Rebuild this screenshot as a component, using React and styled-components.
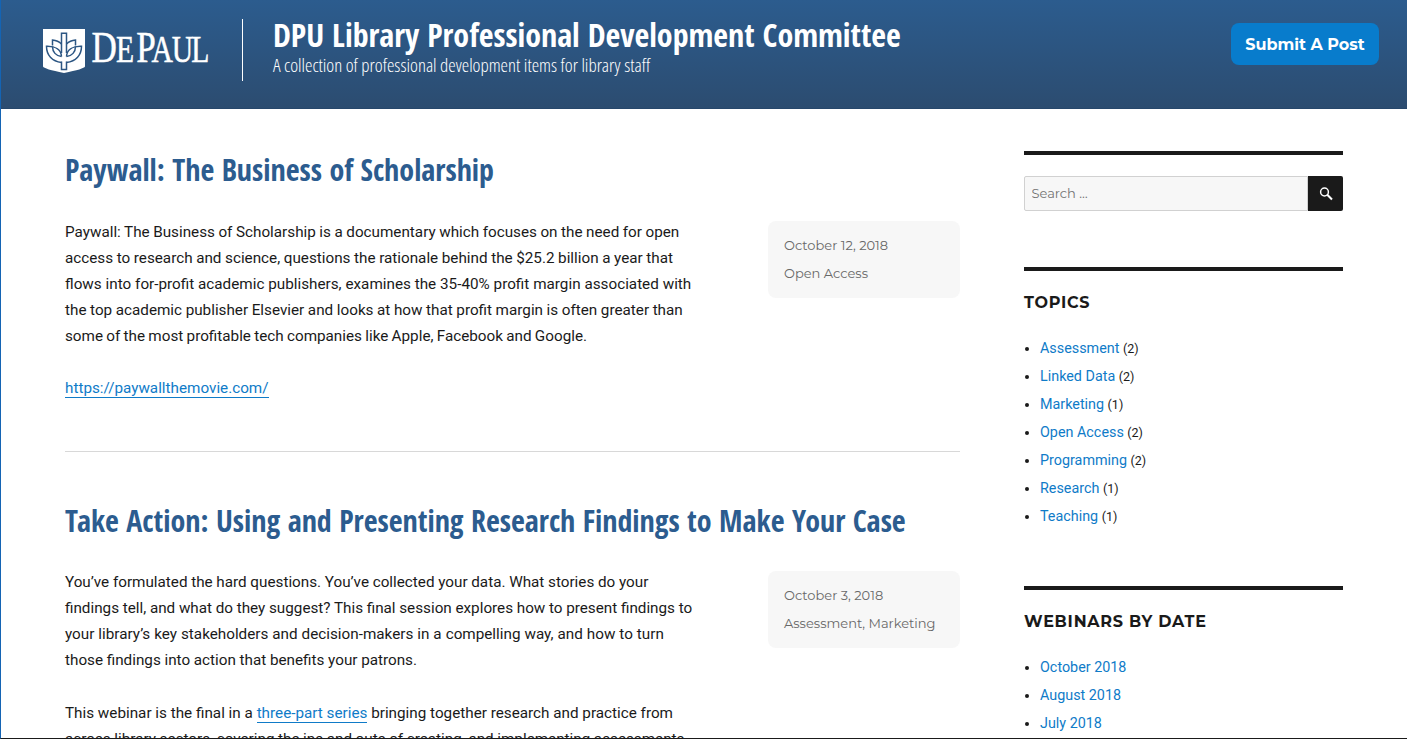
import React from "react";
import styled, { createGlobalStyle } from "styled-components";

const GlobalStyle = createGlobalStyle`
  *, *::before, *::after { box-sizing: border-box; }
  html, body { margin: 0; height: 100%; overflow: hidden; }
  body { background: #fff; color: #1a1a1a; font-family: Roboto, "Liberation Sans", sans-serif; }
`;

const Page = styled.div`
  height: 739px;
  overflow: hidden;
  display: flex;
  flex-direction: column;
  border-left: 1px solid #1464b4;
  border-bottom: 1px solid #1a1a1a;
  background: #fff;
`;

const Header = styled.header`
  flex: none;
  height: 109px;
  display: flex;
  align-items: flex-start;
  padding: 19px 28px 0 41px;
  background: linear-gradient(#2c5c8e, #2c4c70);
  border-bottom: 1px solid #27476b;
  color: #fff;
`;

const Logo = styled.svg`
  display: block;
  flex: none;
  width: 170px;
  height: 60px;
`;

const LogoText = styled.text`
  font-family: "Liberation Serif", serif;
  font-size: 45px;
  fill: #fff;
  stroke: #fff;
  stroke-width: 0.5px;
`;

const SmallCap = styled.tspan`
  font-size: 38px;
`;

const Branding = styled.div`
  flex: 1;
  height: 62px;
  margin-left: 30px;
  padding-left: 30px;
  border-left: 1px solid #fff;
  white-space: nowrap;
`;

const SiteTitle = styled.h1`
  margin: -4px 0 0;
  font-family: "Open Sans Condensed", "Open Sans", sans-serif;
  font-size: 32px;
  font-weight: 700;
  line-height: 40px;
`;

const Tagline = styled.p`
  margin: 1px 0 0;
  font-family: "Open Sans", sans-serif;
  font-stretch: 75%;
  font-size: 18.8px;
  font-weight: 300;
  line-height: 18px;
`;

const SubmitButton = styled.button`
  width: 148px;
  height: 42px;
  margin-top: 4px;
  padding: 1px 0 0;
  border: 0;
  border-radius: 8px;
  background: #087ccc;
  color: #fff;
  font: 700 16px/41px Montserrat, sans-serif;
`;

const Content = styled.div`
  flex: 1;
  min-height: 0;
  display: flex;
  justify-content: space-between;
  padding: 42px 64px 0;
`;

const Main = styled.main`
  width: 895px;
`;

const Post = styled.article`
  height: 301px;
  border-bottom: 1px solid #d8d8d8;

  & + & {
    height: auto;
    margin-top: 50px;
    border-bottom: 0;
  }
`;

const PostTitle = styled.h2`
  margin: 0;
  padding-top: 1px;
  font: 700 30px/36px "Open Sans Condensed", "Open Sans", sans-serif;
  color: #2c5c8f;
  white-space: nowrap;
`;

const PostBody = styled.div`
  display: flex;
  justify-content: space-between;
  align-items: flex-start;
  margin-top: 31px;

  ${Post} + ${Post} & { margin-top: 30px; }
`;

const Paragraph = styled.p`
  margin: 0 0 ${(p) => p.$gap || 26}px;
  font-size: 15.25px;
  line-height: 26px;
  white-space: nowrap;
`;

const TextLine = styled.span`
  display: block;
  word-spacing: ${(p) => p.$space || 0}px;
`;

const BodyLink = styled.a`
  color: #0f7bc8;
  border-bottom: 1px solid #0f7bc8;
`;

const Meta = styled.div`
  width: 192px;
  height: 77px;
  margin-top: 2px;
  padding: 10px 16px;
  border-radius: 8px;
  background: #f7f7f7;
  color: #686868;
  font: 400 13px/28px Montserrat, sans-serif;
  white-space: nowrap;
`;

const Sidebar = styled.aside`
  width: 319px;
`;

const Widget = styled.section`
  height: ${(p) => p.$height}px;
  padding-top: 21px;
  border-top: 4px solid #1a1a1a;
`;

const WidgetTitle = styled.h2`
  margin: 0;
  padding-top: 1px;
  font: 700 16px/20px Montserrat, sans-serif;
  letter-spacing: 0.76px;
`;

const SearchForm = styled.form`
  display: flex;
  height: 35px;
`;

const SearchInput = styled.input`
  flex: 1;
  min-width: 0;
  padding: 0 6.5px 2px;
  border: 1px solid #d1d1d1;
  border-radius: 2px 0 0 2px;
  background: #f7f7f7;
  font: 400 13px Montserrat, sans-serif;

  &::placeholder { color: #737373; opacity: 1; }
`;

const SearchButton = styled.button`
  width: 35px;
  padding: 0;
  display: grid;
  place-items: center;
  border: 0;
  border-radius: 0 2px 2px 0;
  background: #1a1a1a;
`;

const List = styled.ul`
  margin: 21px 0 0;
  padding: 0;
  list-style: none;
`;

const Item = styled.li`
  display: flex;
  align-items: center;
  height: 28px;
  font-size: 13px;

  &::before {
    content: "";
    width: 4px;
    height: 4px;
    margin: 2px 11px 0 1px;
    border-radius: 50%;
    background: #1a1a1a;
  }
`;

const ItemLink = styled.a`
  font-size: 14.35px;
  color: #0f7bc8;
`;

const Count = styled.span`
  margin-left: 3.5px;
  font-size: 12.5px;
`;

const posts = [
  {
    title: "Paywall: The Business of Scholarship",
    date: "October 12, 2018",
    topics: "Open Access",
    paragraphs: [
      {
        lines: [
          [-0.25, "Paywall: The Business of Scholarship is a documentary which focuses on the need for open"],
          [-0.2, "access to research and science, questions the rationale behind the $25.2 billion a year that"],
          [0.08, "flows into for-profit academic publishers, examines the 35-40% profit margin associated with"],
          [-0.2, "the top academic publisher Elsevier and looks at how that profit margin is often greater than"],
          [-0.5, "some of the most profitable tech companies like Apple, Facebook and Google."],
        ],
      },
      { lines: [[0, <BodyLink>https://paywallthemovie.com/</BodyLink>]] },
    ],
  },
  {
    title: "Take Action: Using and Presenting Research Findings to Make Your Case",
    date: "October 3, 2018",
    topics: "Assessment, Marketing",
    paragraphs: [
      {
        gap: 27,
        lines: [
          [-0.1, "You’ve formulated the hard questions. You’ve collected your data. What stories do your"],
          [-0.1, "findings tell, and what do they suggest? This final session explores how to present findings to"],
          [0.2, "your library’s key stakeholders and decision-makers in a compelling way, and how to turn"],
          [-0.1, "those findings into action that benefits your patrons."],
        ],
      },
      {
        lines: [
          [
            0,
            <>
              This webinar is the final in a <BodyLink>three-part series</BodyLink> bringing together research and practice from
            </>,
          ],
          [-0.2, "across library sectors, covering the ins and outs of creating, and implementing assessments"],
        ],
      },
    ],
  },
];

const topics = [
  ["Assessment", 2],
  ["Linked Data", 2],
  ["Marketing", 1],
  ["Open Access", 2],
  ["Programming", 2],
  ["Research", 1],
  ["Teaching", 1],
];

const months = ["October 2018", "August 2018", "July 2018"];

function DePaulLogo() {
  return (
    <Logo viewBox="42 19 170 60" role="img" aria-label="DePaul">
      <path d="M43 29H85V66.500Q84 69 64 73Q44 69 43 66.500Z" fill="#fff" />
      <g fill="none" stroke="#2c5683" strokeWidth="1.5">
        <path d="M61.500 53V33.300H66.500V53" />
        <path d="M61.500 44Q58 40.500 52.500 40V45.500M66.500 44Q70 40.500 75.500 40V45.500" />
        <path d="M61.500 62.500C52 61.500 46.500 55 46.500 46.300C55 46 61 49.500 61.500 56.500M66.500 62.500C76 61.500 81.500 55 81.500 46.300C73 46 67 49.500 66.500 56.500" />
        <path d="M52.500 46.500C52.500 52 56 56 61.500 56.500M75.500 46.500C75.500 52 72 56 66.500 56.500" />
        <path d="M61.500 61.500V69.500H66.500V61.500" />
      </g>
      <LogoText transform="translate(91.500 62) scale(.78 1)">
        D<SmallCap x="31.500">E</SmallCap>
        <tspan x="57.500">P</tspan>
        <SmallCap x="77">A</SmallCap>
        <SmallCap x="103">U</SmallCap>
        <SmallCap x="128">L</SmallCap>
      </LogoText>
    </Logo>
  );
}

export default function App() {
  return (
    <>
      <GlobalStyle />
      <Page>
        <Header>
          <DePaulLogo />
          <Branding>
            <SiteTitle>DPU Library Professional Development Committee</SiteTitle>
            <Tagline>A collection of professional development items for library staff</Tagline>
          </Branding>
          <SubmitButton>Submit A Post</SubmitButton>
        </Header>
        <Content>
          <Main>
            {posts.map((post) => (
              <Post key={post.title}>
                <PostTitle>{post.title}</PostTitle>
                <PostBody>
                  <div>
                    {post.paragraphs.map((paragraph, i) => (
                      <Paragraph key={i} $gap={paragraph.gap}>
                        {paragraph.lines.map(([space, line], j) => (
                          <TextLine key={j} $space={space}>{line}</TextLine>
                        ))}
                      </Paragraph>
                    ))}
                  </div>
                  <Meta>
                    <div>{post.date}</div>
                    <div>{post.topics}</div>
                  </Meta>
                </PostBody>
              </Post>
            ))}
          </Main>
          <Sidebar>
            <Widget $height={116}>
              <SearchForm>
                <SearchInput placeholder="Search …" />
                <SearchButton type="button" aria-label="Search">
                  <svg width="14" height="14" viewBox="0 0 14 14" fill="none" stroke="#fff">
                    <circle cx="5.500" cy="5" r="3.900" strokeWidth="1.500" />
                    <path d="M8.300 7.800L13 12.500" strokeWidth="2" />
                  </svg>
                </SearchButton>
              </SearchForm>
            </Widget>
            <Widget $height={319}>
              <WidgetTitle>TOPICS</WidgetTitle>
              <List>
                {topics.map(([name, count]) => (
                  <Item key={name}>
                    <ItemLink>{name}</ItemLink>
                    <Count>({count})</Count>
                  </Item>
                ))}
              </List>
            </Widget>
            <Widget $height={200}>
              <WidgetTitle>WEBINARS BY DATE</WidgetTitle>
              <List>
                {months.map((month) => (
                  <Item key={month}>
                    <ItemLink>{month}</ItemLink>
                  </Item>
                ))}
              </List>
            </Widget>
          </Sidebar>
        </Content>
      </Page>
    </>
  );
}
